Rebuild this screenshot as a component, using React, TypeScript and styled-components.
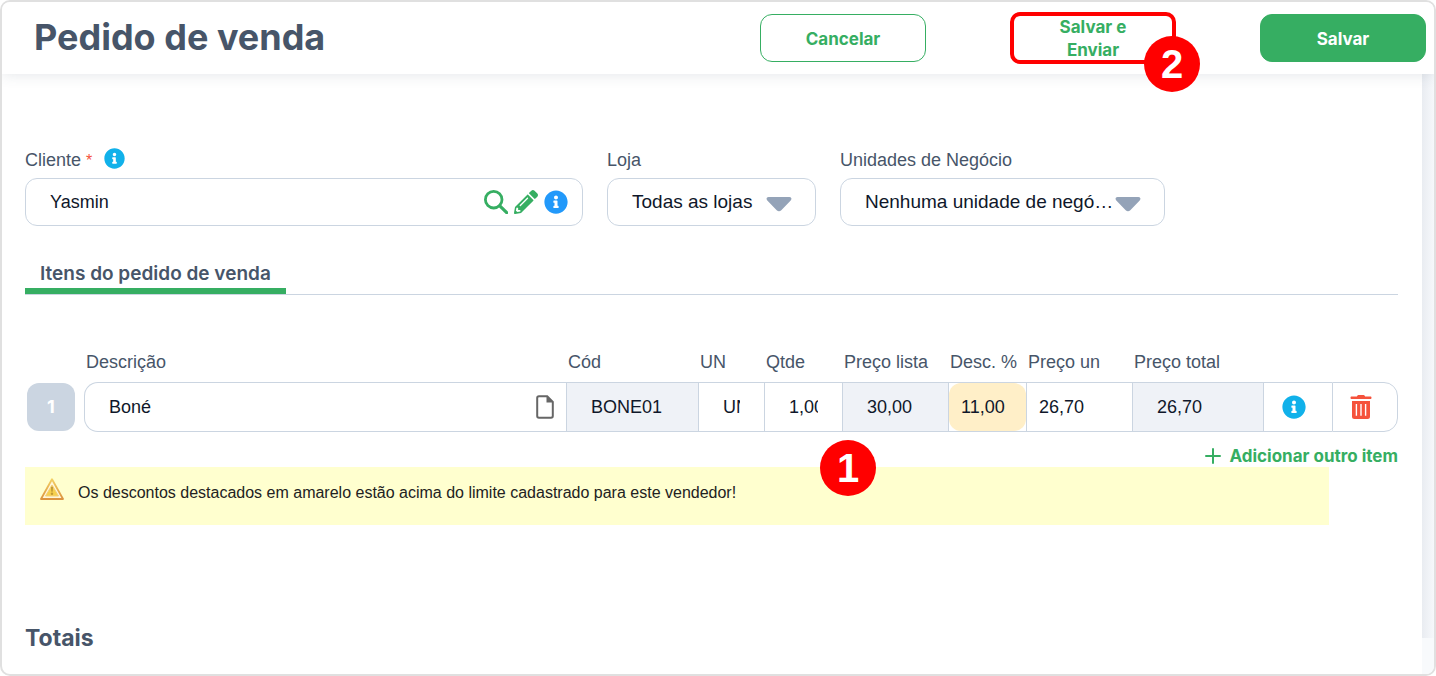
import React from 'react';
import styled, { createGlobalStyle, css } from 'styled-components';
import { FaInfoCircle, FaPencilAlt } from 'react-icons/fa';

const color = {
  text: '#475569',
  ink: '#0f172a',
  line: '#cbd5e1',
  green: '#36ae62',
  red: '#ff0000',
  danger: '#f5523c',
  sky: '#11b1ea',
  muted: '#eff2f7',
};

const heading = "Inter, 'Open Sans', sans-serif";
const body = "'Liberation Sans', Arial, sans-serif";

const GlobalStyle = createGlobalStyle`
  *, *::before, *::after { box-sizing: border-box; }
  body { margin: 0; background: #fff; font-family: ${body}; color: ${color.text}; }
  button, input, select { font: inherit; color: inherit; }
  button { cursor: pointer; }
`;

const Frame = styled.div`
  display: flex;
  flex-direction: column;
  min-height: 100vh;
  border: 2px solid #e0e0e0;
  border-radius: 10px;
  overflow: hidden;
`;

const Header = styled.header`
  display: flex;
  align-items: center;
  justify-content: space-between;
  position: relative;
  z-index: 1;
  height: 72px;
  padding: 0 8px 0 32px;
  background: #fff;
  box-shadow: 0 0 14px rgba(71, 85, 105, 0.16);
`;

const Title = styled.h1`
  margin: 0;
  padding-bottom: 2px;
  font: 700 36px/44px ${heading};
`;

const Actions = styled.div`
  display: flex;
  align-items: center;
  gap: 84px;
`;

const Action = styled.button<{ $kind: 'outline' | 'marked' | 'solid' }>`
  position: relative;
  width: 166px;
  height: 48px;
  padding: 2px 32px 0;
  border: 1px solid ${color.green};
  border-radius: 12px;
  background: #fff;
  color: ${color.green};
  font: 700 17px/23px ${heading};
  ${(p) =>
    p.$kind === 'solid' &&
    css`
      background: ${color.green};
      color: #fff;
    `}
  ${(p) =>
    p.$kind === 'marked' &&
    css`
      height: 52px;
      padding: 0 32px;
      border: 4px solid ${color.red};
      border-radius: 10px;
    `}
`;

const Marker = styled.span<{ $left: number; $top: number }>`
  position: absolute;
  left: ${(p) => p.$left}px;
  top: ${(p) => p.$top}px;
  z-index: 2;
  width: 56px;
  height: 56px;
  border-radius: 50%;
  background: ${color.red};
  color: #fff;
  font: 700 40px/56px ${body};
  text-align: center;
`;

const Body = styled.div`
  display: flex;
  flex: 1;
`;

const Panel = styled.main`
  flex: 1;
  min-width: 0;
  padding: 72px 24px 16px 23px;
`;

const Gutter = styled.div`
  display: flex;
  width: 12px;
  padding-bottom: 36px;
  background: #f8fafc;
  &::before {
    content: '';
    flex: 1;
    background: linear-gradient(to right, #e9ecf1, #f6f8fb);
  }
`;

const Fields = styled.div`
  display: grid;
  grid-template-columns: 558fr 209fr 325fr 209fr;
  gap: 24px;
`;

const Field = styled.div`
  display: flex;
  flex-direction: column;
  gap: 4px;
`;

const LabelRow = styled.div`
  display: flex;
  align-items: center;
  gap: 12px;
  height: 28px;
  font-size: 18px;
  line-height: 28px;
`;

const LabelHelp = styled.span`
  display: flex;
  padding-bottom: 4px;
`;

const Required = styled.span`
  color: ${color.danger};
  font-size: 16px;
`;

const Box = styled.div<{ $gap?: number }>`
  display: flex;
  align-items: center;
  gap: ${(p) => p.$gap ?? 0}px;
  height: 48px;
  padding-right: 14px;
  border: 1px solid ${color.line};
  border-radius: 12px;
  color: ${color.ink};
`;

const TextInput = styled.input<{ $pad?: number }>`
  display: block;
  flex: 1;
  width: 100%;
  min-width: 0;
  height: 46px;
  padding: 0 ${(p) => p.$pad ?? 24}px;
  border: 0;
  outline: 0;
  background: transparent;
  color: ${color.ink};
  font-size: 18px;
`;

const Select = styled.select`
  flex: 1;
  width: 100%;
  min-width: 0;
  height: 46px;
  padding: 0 0 2px 24px;
  border: 0;
  outline: 0;
  appearance: none;
  background: transparent;
  font-size: 19px;
`;

const Caret = styled.svg`
  flex: none;
  margin: 4px 9px 0 0;
  pointer-events: none;
`;

const IconButton = styled.button<{ $color: string }>`
  display: flex;
  flex: none;
  padding: 0;
  border: 0;
  background: none;
  color: ${(p) => p.$color};
`;

const Tabs = styled.div`
  display: flex;
  margin-top: 26px;
  border-bottom: 1px solid ${color.line};
`;

const Tab = styled.button`
  height: 42px;
  padding: 8px 15px 0;
  border: 0;
  border-bottom: 6px solid ${color.green};
  background: none;
  color: ${color.text};
  font: 600 19px/28px ${heading};
`;

const Items = styled.table`
  width: 100%;
  margin-top: 46px;
  table-layout: fixed;
  border-collapse: separate;
  border-spacing: 0;
`;

const Col = styled.col<{ $w?: number }>`
  width: ${(p) => (p.$w ? `${p.$w}px` : 'auto')};
`;

const Th = styled.th`
  height: 41px;
  padding: 2px 0 0 2px;
  color: ${color.text};
  font-size: 18px;
  font-weight: 400;
  line-height: 39px;
  text-align: left;
  white-space: nowrap;
`;

const Td = styled.td<{ $muted?: boolean; $edge?: 'first' | 'last' }>`
  position: relative;
  height: 50px;
  padding: 0;
  border: solid ${color.line};
  border-width: 1px 0 1px 1px;
  background: ${(p) => (p.$muted ? color.muted : '#fff')};
  ${(p) => p.$edge === 'first' && 'border-radius: 14px 0 0 14px;'}
  ${(p) => p.$edge === 'last' && 'border-right-width: 1px; border-radius: 0 14px 14px 0;'}
`;

const IndexCell = styled.td`
  padding: 0 0 0 2px;
`;

const Index = styled.span`
  display: block;
  width: 48px;
  border-radius: 12px;
  background: ${color.line};
  color: #fff;
  font: 700 18px/48px ${heading};
  text-align: center;
`;

const CellContent = styled.div<{ $pad?: number }>`
  display: flex;
  align-items: center;
  height: 48px;
  padding: 0 ${(p) => p.$pad ?? 0}px;
`;

const Highlight = styled.div`
  display: flex;
  align-items: center;
  height: 48px;
  border-radius: 12px;
  background: #ffefc8;
`;

const AddRow = styled.div`
  display: flex;
  align-items: flex-end;
  justify-content: flex-end;
  height: 35px;
`;

const AddButton = styled.button`
  display: flex;
  align-items: center;
  gap: 8px;
  padding: 0;
  border: 0;
  background: none;
  color: ${color.green};
  font: 700 17px/22px ${heading};
`;

const Warning = styled.div`
  display: flex;
  gap: 14px;
  width: 95%;
  height: 58px;
  padding: 10px 15px;
  background: #ffffcf;
  color: #222;
  font-size: 16px;
  line-height: 32px;
`;

const Totals = styled.h2`
  margin: 97px 0 0;
  font: 700 23px/32px ${heading};
`;

const CaretIcon = () => (
  <Caret width="26" height="15" viewBox="0 0 26 15" aria-hidden="true">
    <path d="M2.600 0h20.800c2.100 0 2.700 2.200 1.300 3.500l-9.400 9.800c-1.400 1.400-3.200 1.400-4.600 0L1.300 3.500C-.1 2.200.5 0 2.600 0Z" fill="#94a3b8" />
  </Caret>
);

const SearchIcon = () => (
  <svg width="24" height="24" viewBox="0 0 24 24" fill="none" stroke="currentColor" strokeWidth="2.800">
    <circle cx="9.700" cy="9.700" r="8.300" />
    <path d="m15.800 15.800 6.900 6.900" strokeWidth="3.200" strokeLinecap="round" />
  </svg>
);

const FileIcon = () => (
  <svg width="18" height="24" viewBox="0 0 18 24">
    <path d="M3 1.200h8.200L16.800 6.800V21a1.800 1.800 0 0 1-1.800 1.800H3A1.800 1.800 0 0 1 1.200 21V3A1.800 1.800 0 0 1 3 1.200Z" fill="none" stroke="currentColor" strokeWidth="2" />
    <path d="M10.500 1v6.500H17Z" fill="currentColor" />
  </svg>
);

const TrashIcon = () => (
  <svg width="22" height="24" viewBox="0 0 22 24" fill="currentColor">
    <path d="M7.300.7A1.200 1.200 0 0 1 8.400 0h5.200c.5 0 .9.300 1.100.7l.4.800h5.400c.6 0 1 .5 1 1.300s-.4 1.200-1 1.200H1.500c-.6 0-1-.4-1-1.200s.4-1.300 1-1.300h5.400Z" />
    <path fillRule="evenodd" d="M2 6h18v15.500a2.500 2.500 0 0 1-2.500 2.500h-13A2.500 2.500 0 0 1 2 21.500ZM5.700 9v11.800h1.400V9ZM10.300 9v11.800h1.400V9ZM14.900 9v11.800h1.400V9Z" />
  </svg>
);

const PlusIcon = () => (
  <svg width="16" height="16" viewBox="0 0 16 16" stroke="currentColor" strokeWidth="2" strokeLinecap="round">
    <path d="M8 1v14M1 8h14" />
  </svg>
);

const WarningIcon = () => (
  <svg width="24" height="24" viewBox="0 0 24 24" aria-hidden="true">
    <defs>
      <linearGradient id="rim" x1="0" y1="0" x2="0" y2="1">
        <stop offset="0" stopColor="#f3cf62" />
        <stop offset="1" stopColor="#dc9440" />
      </linearGradient>
    </defs>
    <path d="M12 2.200 23 22H1Z" fill="#fff6d8" stroke="url(#rim)" strokeWidth="1.800" strokeLinejoin="round" />
    <path d="M12 8 18.500 19H5.500Z" fill="#f6d04d" stroke="#f3cf7c" strokeLinejoin="round" />
    <path d="M10.900 9.800h2.200l-.4 5h-1.400Z" fill="#c19a35" />
    <circle cx="12" cy="16.800" r="1.200" fill="#c19a35" />
  </svg>
);

const columns = [
  { id: 'descricao', label: 'Descrição' },
  { id: 'codigo', label: 'Cód', width: 132 },
  { id: 'unidade', label: 'UN', width: 66 },
  { id: 'quantidade', label: 'Qtde', width: 78 },
  { id: 'lista', label: 'Preço lista', width: 106 },
  { id: 'desconto', label: 'Desc. %', width: 78 },
  { id: 'preco', label: 'Preço un', width: 106 },
  { id: 'total', label: 'Preço total', width: 131 },
];

export default function App() {
  return (
    <>
      <GlobalStyle />
      <Frame>
        <Header>
          <Title>Pedido de venda</Title>
          <Actions>
            <Action type="button" $kind="outline">Cancelar</Action>
            <Action type="button" $kind="marked">
              Salvar e Enviar
              <Marker $left={130} $top={20}>2</Marker>
            </Action>
            <Action type="button" $kind="solid">Salvar</Action>
          </Actions>
        </Header>
        <Body>
          <Panel>
            <Fields>
              <Field>
                <LabelRow>
                  <label htmlFor="cliente">
                    Cliente <Required>*</Required>
                  </label>
                  <LabelHelp>
                    <IconButton type="button" $color={color.sky} aria-label="Ajuda">
                      <FaInfoCircle size={21} />
                    </IconButton>
                  </LabelHelp>
                </LabelRow>
                <Box $gap={6}>
                  <TextInput id="cliente" defaultValue="Yasmin" />
                  <IconButton type="button" $color={color.green} aria-label="Pesquisar">
                    <SearchIcon />
                  </IconButton>
                  <IconButton type="button" $color={color.green} aria-label="Editar">
                    <FaPencilAlt size={24} />
                  </IconButton>
                  <IconButton type="button" $color="#2299fa" aria-label="Detalhes do cliente">
                    <FaInfoCircle size={24} />
                  </IconButton>
                </Box>
              </Field>
              <Field>
                <LabelRow>
                  <label htmlFor="loja">Loja</label>
                </LabelRow>
                <Box>
                  <Select id="loja">
                    <option>Todas as lojas</option>
                  </Select>
                  <CaretIcon />
                </Box>
              </Field>
              <Field>
                <LabelRow>
                  <label htmlFor="negocio">Unidades de Negócio</label>
                </LabelRow>
                <Box>
                  <Select id="negocio">
                    <option>Nenhuma unidade de negó…</option>
                  </Select>
                  <CaretIcon />
                </Box>
              </Field>
            </Fields>

            <Tabs role="tablist">
              <Tab type="button" role="tab" aria-selected="true">Itens do pedido de venda</Tab>
            </Tabs>

            <Items>
              <colgroup>
                <Col $w={59} />
                {columns.map((c) => (
                  <Col key={c.id} $w={c.width} />
                ))}
                <Col $w={69} />
                <Col $w={66} />
              </colgroup>
              <thead>
                <tr>
                  <Th />
                  {columns.map((c) => (
                    <Th key={c.id} scope="col">
                      <label htmlFor={c.id}>{c.label}</label>
                    </Th>
                  ))}
                  <Th />
                  <Th />
                </tr>
              </thead>
              <tbody>
                <tr>
                  <IndexCell>
                    <Index>1</Index>
                  </IndexCell>
                  <Td $edge="first">
                    <CellContent>
                      <TextInput id="descricao" defaultValue="Boné" />
                      <CellContent $pad={12}>
                        <IconButton type="button" $color="#666" aria-label="Observações">
                          <FileIcon />
                        </IconButton>
                      </CellContent>
                    </CellContent>
                  </Td>
                  <Td $muted>
                    <TextInput id="codigo" defaultValue="BONE01" readOnly />
                  </Td>
                  <Td>
                    <TextInput id="unidade" defaultValue="UN" />
                  </Td>
                  <Td>
                    <TextInput id="quantidade" defaultValue="1,00" />
                  </Td>
                  <Td $muted>
                    <TextInput id="lista" defaultValue="30,00" readOnly />
                    <Marker $left={-23} $top={57}>1</Marker>
                  </Td>
                  <Td>
                    <Highlight>
                      <TextInput id="desconto" defaultValue="11,00" $pad={12} />
                    </Highlight>
                  </Td>
                  <Td>
                    <TextInput id="preco" defaultValue="26,70" $pad={12} />
                  </Td>
                  <Td $muted>
                    <TextInput id="total" defaultValue="26,70" readOnly />
                  </Td>
                  <Td>
                    <CellContent $pad={18}>
                      <IconButton type="button" $color={color.sky} aria-label="Detalhes do item">
                        <FaInfoCircle size={24} />
                      </IconButton>
                    </CellContent>
                  </Td>
                  <Td $edge="last">
                    <CellContent $pad={17}>
                      <IconButton type="button" $color={color.danger} aria-label="Excluir item">
                        <TrashIcon />
                      </IconButton>
                    </CellContent>
                  </Td>
                </tr>
              </tbody>
            </Items>

            <AddRow>
              <AddButton type="button">
                <PlusIcon />
                Adicionar outro item
              </AddButton>
            </AddRow>
            <Warning role="alert">
              <WarningIcon />
              Os descontos destacados em amarelo estão acima do limite cadastrado para este vendedor!
            </Warning>
            <Totals>Totais</Totals>
          </Panel>
          <Gutter />
        </Body>
      </Frame>
    </>
  );
}
